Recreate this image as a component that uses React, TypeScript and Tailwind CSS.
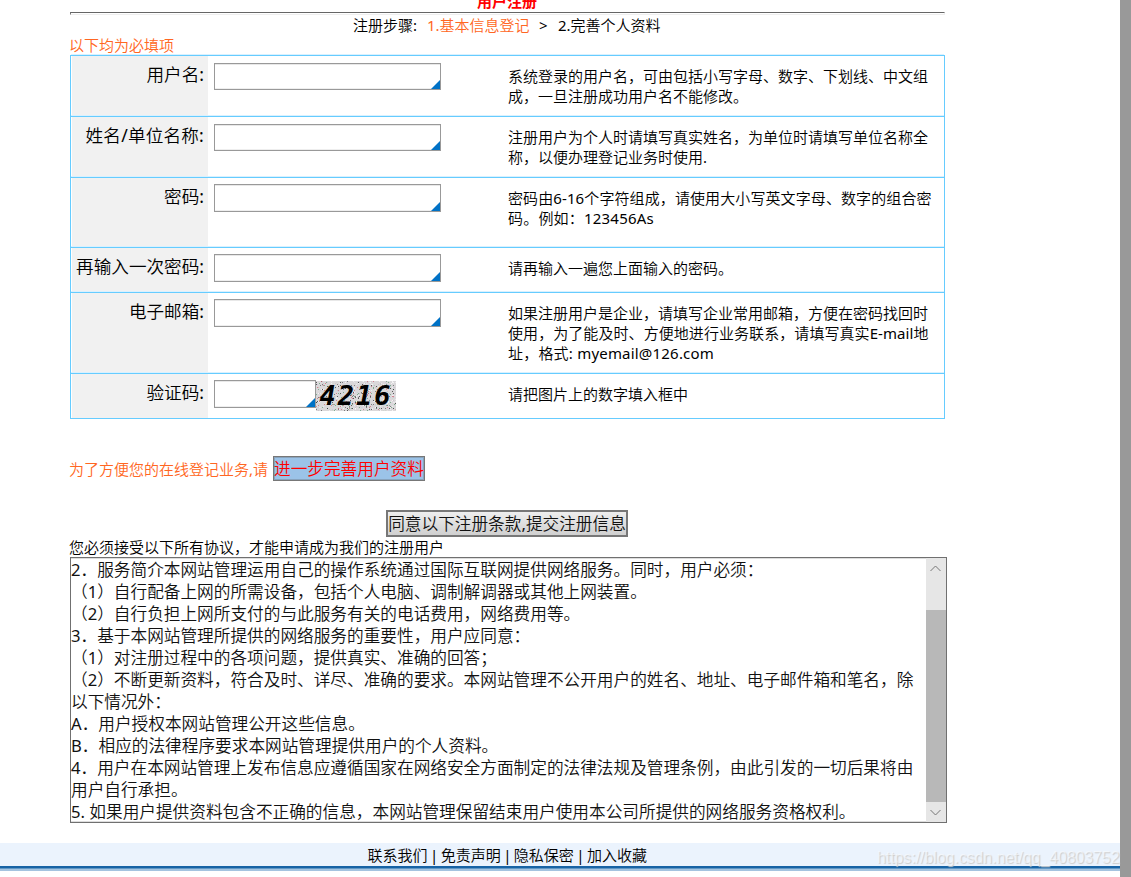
import React from 'react';

type Row = { label: string; labelTrack?: string; height: string; field: string; hints: { text: string; track?: string }[] };

const rows: Row[] = [
  {
    label: '用户名:', height: 'h-[61px]', field: 'h-[27px]',
    hints: [{ text: '系统登录的用户名，可由包括小写字母、数字、下划线、中文组' }, { text: '成，一旦注册成功用户名不能修改。' }],
  },
  {
    label: '姓名/单位名称:', labelTrack: 'tracking-[0.2px]', height: 'h-[61px]', field: 'h-[27px]',
    hints: [{ text: '注册用户为个人时请填写真实姓名，为单位时请填写单位名称全' }, { text: '称，以便办理登记业务时使用.' }],
  },
  {
    label: '密码:', height: 'h-[70px]', field: 'h-[28px]',
    hints: [{ text: '密码由6-16个字符组成，请使用大小写英文字母、数字的组合密', track: 'tracking-[0.1px]' }, { text: '码。例如：123456As', track: 'tracking-[0.2px]' }],
  },
  { label: '再输入一次密码:', height: 'h-[45px]', field: 'h-[28px]', hints: [{ text: '请再输入一遍您上面输入的密码。' }] },
  {
    label: '电子邮箱:', height: 'h-[81px]', field: 'h-[28px]',
    hints: [
      { text: '如果注册用户是企业，请填写企业常用邮箱，方便在密码找回时' },
      { text: '使用，为了能及时、方便地进行业务联系，请填写真实E-mail地', track: 'tracking-[0.07px]' },
      { text: '址，格式: myemail@126.com', track: 'tracking-[0.2px]' },
    ],
  },
  { label: '验证码:', height: 'h-[45px]', field: 'h-[28px]', hints: [{ text: '请把图片上的数字填入框中' }] },
];

const terms = [
  '2．服务简介本网站管理运用自己的操作系统通过国际互联网提供网络服务。同时，用户必须：',
  '（1）自行配备上网的所需设备，包括个人电脑、调制解调器或其他上网装置。',
  '（2）自行负担上网所支付的与此服务有关的电话费用，网络费用等。',
  '3．基于本网站管理所提供的网络服务的重要性，用户应同意：',
  '（1）对注册过程中的各项问题，提供真实、准确的回答；',
  '（2）不断更新资料，符合及时、详尽、准确的要求。本网站管理不公开用户的姓名、地址、电子邮件箱和笔名，除',
  '以下情况外：',
  'A．用户授权本网站管理公开这些信息。',
  'B．相应的法律程序要求本网站管理提供用户的个人资料。',
  '4．用户在本网站管理上发布信息应遵循国家在网络安全方面制定的法律法规及管理条例，由此引发的一切后果将由',
  '用户自行承担。',
  '5. 如果用户提供资料包含不正确的信息，本网站管理保留结束用户使用本公司所提供的网络服务资格权利。',
];

/* Latin runs keep the regular weight while the Chinese text is one step lighter. */
function Mixed({ text }: { text: string }) {
  return (
    <>
      {text.split(/([\x21-\x7e]+)/).map((part, i) =>
        i % 2 ? <span key={i} className="font-normal">{part}</span> : part,
      )}
    </>
  );
}

function Field({ size }: { size: string }) {
  return (
    <div className={`flex shrink-0 items-end justify-end border border-[#999] bg-white shadow-[inset_0_1px_0_#e8e8e8,inset_0_-1px_0_#eee] ${size}`}>
      <svg className="h-[9px] w-[9px]" viewBox="0 0 9 9">
        <path d="M9 0V9H0Z" fill="#0072c6" />
      </svg>
    </div>
  );
}

const speckColors = ['#222', '#555', '#d06070', '#5a9a70', '#c8c8d8', '#fff', '#f4f4f4', '#c8bcc4', '#e8e8e8', '#ccd8cc'];

function Captcha() {
  let seed = 4216;
  const next = () => {
    seed = (seed * 1103515245 + 12345) % 2147483648;
    return seed / 2147483648;
  };
  const specks = Array.from({ length: 620 }, () => ({
    x: Math.floor(next() * 80),
    y: Math.floor(next() * 30),
    c: speckColors[Math.floor(next() * speckColors.length)],
  }));
  return (
    <svg className="mt-px h-[30px] w-[80px] shrink-0" viewBox="0 0 80 30">
      <rect width="80" height="30" fill="#dad8da" />
      {specks.map((s, i) => (
        <rect key={i} x={s.x} y={s.y} width="1" height="1" fill={s.c} opacity="0.7" />
      ))}
      <text x="3.5" y="24" fontFamily="DejaVu Sans Mono" fontWeight="700" fontStyle="italic" fontSize="27" letterSpacing="2">4216</text>
    </svg>
  );
}

function Chevron({ d }: { d: string }) {
  return (
    <div className="flex h-5 items-center justify-center pr-px">
      <svg className="h-[7px] w-[11px]" viewBox="0 0 11 7">
        <path d={d} fill="none" stroke="#777" strokeWidth="1" />
      </svg>
    </div>
  );
}

export default function App() {
  return (
    <div className="relative flex h-[877px] w-[1131px] overflow-hidden bg-white font-['Noto_Sans','Noto_Sans_CJK_SC',sans-serif] text-[15px] text-black [text-spacing-trim:space-all]">
      <div className="flex w-[1120px] flex-col">
        <div className="flex h-[843px] flex-col pl-[70px]">
          <div className="flex h-3 w-[874px] items-start justify-center">
            <b className="-mt-[9px] text-[15px] leading-5 font-bold text-[#f00]">用户注册</b>
          </div>
          <div className="h-[3px] w-[875px] border border-t-[#666] border-r-[#eee] border-b-[#eee] border-l-[#777]" />
          <div className="flex h-[22px] w-[875px] whitespace-pre pl-[283px] leading-[20px] font-[350]">
            <span className="w-[74px]"><Mixed text="注册步骤:" /></span>
            <span className="w-[112px] text-[#f62]"><Mixed text="1.基本信息登记" /></span>
            <span className="w-[19px] font-normal">&gt;</span>
            <span><Mixed text="2.完善个人资料" /></span>
          </div>
          <div className="-ml-px h-[18px] leading-[16px] font-[350] text-[#f62]">以下均为必填项</div>
          <div className="flex w-[875px] flex-col border border-t-0 border-[#6cf]">
            {rows.map((r, i) => (
              <div key={r.label} className={`flex border-t border-[#6cf] shadow-[0_-1px_0_#d9f1ff] ${r.height}`}>
                <div className={`w-[137px] shrink-0 border-l border-white bg-[#f1f1f1] pt-[5px] pr-[4px] text-right text-[17.6px] leading-[26px] font-[350] whitespace-nowrap ${r.labelTrack ?? ''}`}>
                  <Mixed text={r.label} />
                </div>
                <div className={`flex w-[300px] items-start pl-[6px] ${i < 2 ? 'pt-[7px]' : 'pt-[6px]'}`}>
                  {i === 5 ? (
                    <>
                      <Field size="h-[28px] w-[102px]" />
                      <Captcha />
                    </>
                  ) : (
                    <Field size={`${r.field} w-[227px]`} />
                  )}
                </div>
                <div className="pt-[10px] leading-5 font-[350] whitespace-nowrap">
                  {r.hints.map((h) => (
                    <div key={h.text} className={h.track}><Mixed text={h.text} /></div>
                  ))}
                </div>
              </div>
            ))}
          </div>
          <div className="mt-[37px] flex h-[25px] items-center">
            <span className="mt-[2px] -ml-px w-[204px] whitespace-nowrap text-[#f62] font-[350]"><Mixed text="为了方便您的在线登记业务,请" /></span>
            <button className="flex h-[25px] w-[152px] items-center border border-[#777] bg-[#9bc3e8] text-[16.67px] font-[350] whitespace-nowrap text-[#f00] shadow-[inset_0_0_0_1px_#88a3bd]">进一步完善用户资料</button>
          </div>
          <div className="mt-[29px] flex pl-[316px]">
            <button className="h-[27px] w-[242px] border-2 border-[#777] bg-linear-to-b from-[#eee] to-[#d0d0d0] text-center text-[16.67px] leading-[23px] font-[350] whitespace-nowrap text-[#111]"><Mixed text="同意以下注册条款,提交注册信息" /></button>
          </div>
          <div className="-ml-px h-5 leading-5 font-[350]">您必须接受以下所有协议，才能申请成为我们的注册用户</div>
          <div className="flex h-[266px] w-[877px] border border-[#707070]">
            <div className="w-[855px] overflow-hidden pt-px text-[16.67px] leading-[22px] font-[350] whitespace-nowrap text-[#111] shadow-[inset_0_1px_0_#ddd,inset_0_-1px_0_#ddd]">
              {terms.map((t, i) => <div key={i}><Mixed text={t} /></div>)}
            </div>
            <div className="flex w-5 flex-col bg-[#e6e6e6]">
              <Chevron d="M0.5 6L5.5 1L10.5 6" />
              <div className="mt-8 h-[192px] bg-[#b8b8b8]" />
              <Chevron d="M0.5 1L5.5 6L10.5 1" />
            </div>
          </div>
        </div>
        <div className="h-[23px] bg-[#ebf3fd] pl-[367.5px] leading-[25px] font-[350] whitespace-pre [word-spacing:-1.45px]"><Mixed text="联系我们 | 免责声明 | 隐私保密 | 加入收藏" /></div>
        <div className="h-[5px] border-t-2 border-b-2 border-t-[#1763a5] border-b-[#a4c3df] bg-[#5f97c6]" />
      </div>
      <div className="w-[11px] bg-[#999]" />
      <div className="absolute top-[848px] left-[877px] font-['Liberation_Sans',sans-serif] text-[15.8px] leading-5 whitespace-nowrap text-white/50 [text-shadow:1px_1px_1px_#ccc]">https://blog.csdn.net/qq_40803752</div>
    </div>
  );
}
